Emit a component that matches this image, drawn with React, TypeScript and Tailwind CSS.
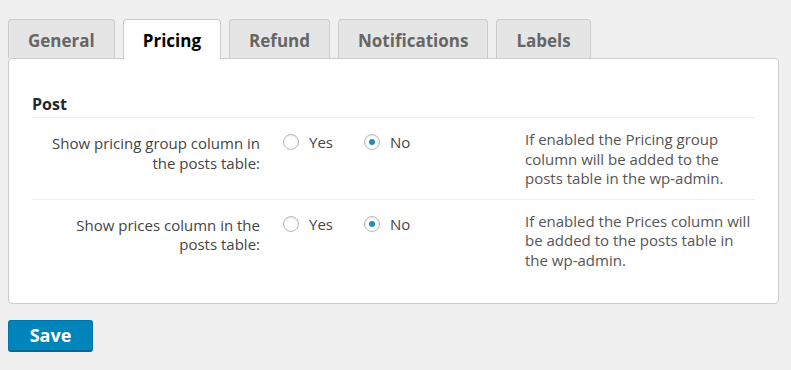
const tabs = ['General', 'Pricing', 'Refund', 'Notifications', 'Labels']

const Radio = ({ checked, label }: { checked?: boolean; label: string }) => (
  <label className="flex items-center gap-[10px] text-[15px] text-[#444]">
    <span className="w-4 h-4 rounded-full border border-[#b4b9be] bg-white flex items-center justify-center shadow-[inset_0_1px_2px_rgba(0,0,0,0.1)]">
      {checked && <span className="w-[6px] h-[6px] rounded-full bg-[#1e8cbe]" />}
    </span>
    {label}
  </label>
)

const Row = ({ label, desc }: { label: string; desc: string }) => (
  <div className="flex border-b border-[#eee] pt-3 pb-[10px] last:border-b-0">
    <div className="w-[228px] pl-4 pt-1 text-right text-[15px] leading-[19.5px] text-[#444]">
      {label}
    </div>
    <div className="ml-[23px] w-[242px] flex gap-[31px] items-start pt-[1px]">
      <Radio label="Yes" />
      <Radio checked label="No" />
    </div>
    <p className="w-[228px] text-[15px] leading-[19.5px] text-[#555]">{desc}</p>
  </div>
)

export default function App() {
  return (
    <div className="w-[791px] h-[370px] bg-[#f0f0f0] pt-[19px] px-2 font-['Open_Sans',sans-serif]">
      <div className="flex gap-[8px] items-end">
        {tabs.map((t) =>
          t === 'Pricing' ? (
            <div
              key={t}
              className="relative z-10 -mb-px h-[40px] px-[19px] pt-[3px] rounded-t border border-b-0 border-[#ccc] bg-white text-[17px] font-bold text-black flex items-center"
            >
              {t}
            </div>
          ) : (
            <div
              key={t}
              className="h-[39px] px-[19px] pt-[3px] rounded-t border border-b-0 border-[#ccc] bg-[#e5e5e5] text-[17px] font-bold text-[#666] flex items-center"
            >
              {t}
            </div>
          )
        )}
      </div>
      <div className="w-[771px] h-[246px] bg-white border border-[#ccc] rounded px-[23px] pt-[33px]">
        <h3 className="text-[16px] font-bold text-[#23282d] pb-[1px] border-b border-[#eee]">Post</h3>
        <Row
          label="Show pricing group column in the posts table:"
          desc="If enabled the Pricing group column will be added to the posts table in the wp-admin."
        />
        <Row
          label="Show prices column in the posts table:"
          desc="If enabled the Prices column will be added to the posts table in the wp-admin."
        />
      </div>
      <button className="mt-4 w-[85px] h-[32px] rounded-[3px] bg-[#0085ba] border border-[#0073aa] border-b-[#006799] border-b-2 text-white text-[18px] font-bold">
        Save
      </button>
    </div>
  )
}
